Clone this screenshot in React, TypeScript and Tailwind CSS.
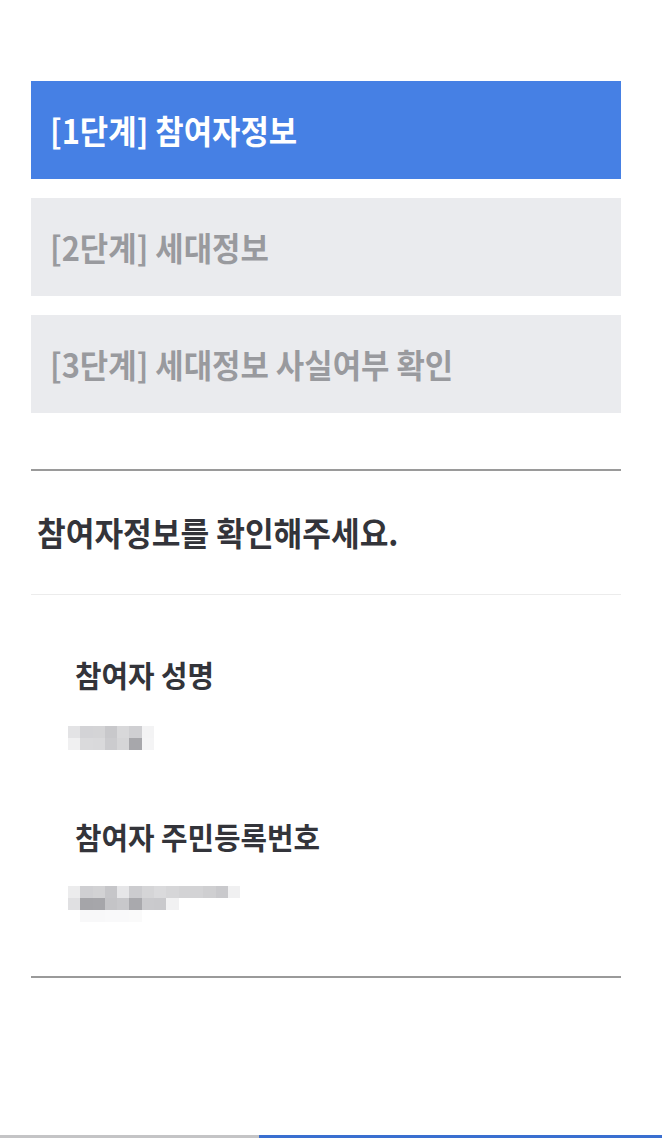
import React from "react";

const font = { fontFamily: '"Noto Sans CJK KR", "Noto Sans", sans-serif' };

const nameBlocks: string[][] = [
  ["#e3e3e5", "#d3d3d6", "#d4d4d6", "#c8c8cb", "#d8d8da", "#cfcfd2", "#f3f3f4"],
  ["#f0f0f1", "#dadadc", "#d9d9db", "#cbcbce", "#d5d5d7", "#a7a7ab", "#f4f4f5"],
];
const rrnBlocks: string[][] = [
  ["#ececed", "#cfcfd2", "#d2d2d4", "#c6c6c9", "#e6e6e8", "#cccccf", "#d5d5d7", "#dadadc", "#d6d6d8", "#d3d3d5", "#d3d3d5", "#cfcfd1", "#c9c9cc", "#f0f0f1"],
  ["#e0e0e2", "#a5a5a9", "#a6a6aa", "#c4c4c7", "#c8c8cb", "#a9a9ad", "#cacacd", "#c9c9cc", "#f1f1f2"],
  ["#ffffff", "#f8f8f9", "#f8f8f9", "#f9f9fa", "#f9f9fa", "#fafafa"],
];

function Mosaic({ rows }: { rows: string[][] }) {
  return (
    <div className="flex flex-col">
      {rows.map((r, i) => (
        <div key={i} className="flex">
          {r.map((c, j) => (
            <div key={j} className="w-[12.3px] h-[12px]" style={{ background: c }} />
          ))}
        </div>
      ))}
    </div>
  );
}

function Step({ label, active }: { label: string; active?: boolean }) {
  return (
    <div className={`h-[98px] flex items-center pl-[19px] ${active ? "bg-[#4680e4]" : "bg-[#eaebee]"}`}>
      <span
        className={`inline-block origin-left scale-x-[0.935] text-[33px] font-bold whitespace-nowrap leading-none ${
          active ? "text-white" : "text-[#999a9e]"
        }`}
      >
        {label}
      </span>
    </div>
  );
}

export default function App() {
  return (
    <div className="relative w-[662px] h-[1138px] bg-white overflow-hidden" style={font}>
      <div className="ml-[31px] w-[590px] pt-[81px]">
        <div className="flex flex-col gap-[19px]">
          <Step label="[1단계] 참여자정보" active />
          <Step label="[2단계] 세대정보" />
          <Step label="[3단계] 세대정보 사실여부 확인" />
        </div>
        <div className="mt-[56px] border-t-[2px] border-[#9a9a9a]" />
        <div className="h-[124px] flex items-center pl-[6px] border-b border-[#ececec]">
          <span className="inline-block origin-left scale-x-[0.945] text-[33px] font-bold text-[#33343a] whitespace-nowrap leading-none">
            참여자정보를 확인해주세요.
          </span>
        </div>
        <div className="pl-[44px] pt-[61px]">
          <div className="h-[36px] flex items-center">
            <span className="inline-block origin-left scale-x-[0.96] text-[30px] font-bold text-[#33343a] whitespace-nowrap leading-none">
              참여자 성명
            </span>
          </div>
          <div className="mt-[34px] -ml-[7px]">
            <Mosaic rows={nameBlocks} />
          </div>
          <div className="mt-[68px] h-[36px] flex items-center">
            <span className="inline-block origin-left scale-x-[0.96] text-[30px] font-bold text-[#33343a] whitespace-nowrap leading-none">
              참여자 주민등록번호
            </span>
          </div>
          <div className="mt-[32px] -ml-[7px]">
            <Mosaic rows={rrnBlocks} />
          </div>
        </div>
        <div className="mt-[54px] border-t-[2px] border-[#9a9a9a]" />
      </div>
      <div className="absolute bottom-0 left-0 right-0 flex h-[3px]">
        <div className="w-[259px] bg-[#c4c4c6]" />
        <div className="flex-1 bg-[#3a6fd0]" />
      </div>
    </div>
  );
}
